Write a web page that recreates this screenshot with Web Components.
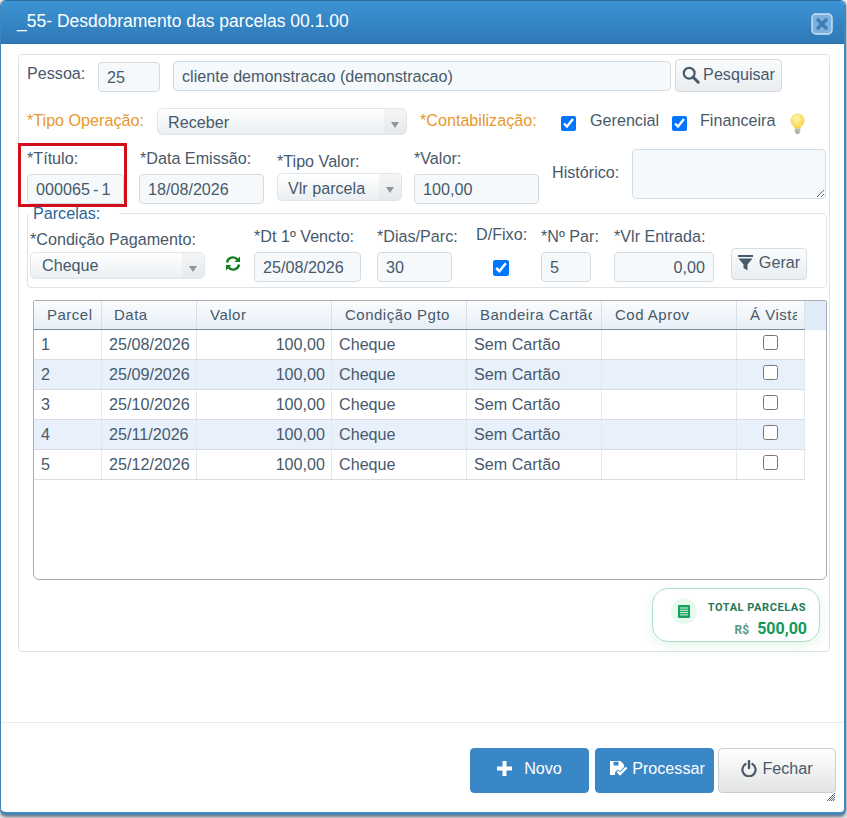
<!DOCTYPE html>
<html lang="pt-BR">
<head>
<meta charset="utf-8">
<title>Desdobramento das parcelas</title>
<style>
  html, body { margin: 0; height: 818px; overflow: hidden; }
  body {
    background: #e6e9ec;
    font: 16.15px "Liberation Sans", Arial, sans-serif;
    color: #47596b;
  }
</style>
</head>
<body>
<x-dialog>
  <span slot="title">_55- Desdobramento das parcelas 00.1.00</span>
  <x-parcel-form></x-parcel-form>
  <x-btn slot="footer" kind="primary" style="width:119px;height:45px;margin-right:2px" gap="12" lift="4"><x-ico slot="icon" name="plus"></x-ico>Novo</x-btn>
  <x-btn slot="footer" kind="primary" style="width:119px;height:45px" gap="4" lift="4" shift="6"><x-ico slot="icon" name="save"></x-ico>Processar</x-btn>
  <x-btn slot="footer" kind="close" style="width:118px;height:45px" gap="5" lift="4"><x-ico slot="icon" name="power"></x-ico>Fechar</x-btn>
</x-dialog>

<script>
(function () {
  const icons = {
    search: '<svg width="18" height="18" viewBox="0 0 18 18"><circle cx="7.2" cy="7.2" r="5.4" fill="none" stroke="#47596b" stroke-width="2.2"/><path d="M11 11l5.2 5.2" stroke="#47596b" stroke-width="3" stroke-linecap="round"/></svg>',
    filter: '<svg width="15" height="16" viewBox="0 0 15 16"><rect x="0" y="0" width="15" height="2" fill="#47596b"/><path d="M0.5 3.5h14l-5 6v6l-4-2.500v-3.500z" fill="#47596b"/></svg>',
    refresh: '<svg width="16" height="17" viewBox="0 0 16 17"><g fill="none" stroke="#12801f" stroke-width="2.400"><path d="M2 7.500a6 6 0 0 1 10.600-2.800"/><path d="M14 9.500a6 6 0 0 1-10.600 2.800"/></g><path d="M15 1.500v5.500h-5.500z" fill="#12801f"/><path d="M1 15.500v-5.500h5.500z" fill="#12801f"/></svg>',
    plus: '<svg width="15" height="15" viewBox="0 0 15 15"><path d="M5.500 0h4v5.500H15v4H9.500V15h-4V9.500H0v-4h5.500z" fill="#fff"/></svg>',
    save: '<svg width="18" height="15" viewBox="0 0 18 15"><path fill="#fff" fill-rule="evenodd" d="M0 0h10.500L14 3.500V6L9.800 10.200 8 8.500 5 11.500V14H0zM3.500 0.800v3.700h5V0.800z"/><path d="M7.500 10.500l2.500 2.500 6.500-6.500" fill="none" stroke="#fff" stroke-width="2.400"/></svg>',
    power: '<svg width="16" height="17" viewBox="0 0 16 17"><path d="M4.600 4a6.600 6.600 0 1 0 6.800 0" fill="none" stroke="#47596b" stroke-width="2.200" stroke-linecap="round"/><path d="M8 1v7" stroke="#47596b" stroke-width="2.400" stroke-linecap="round"/></svg>',
    bulb: '<svg width="15" height="21" viewBox="0 0 15 21"><defs><radialGradient id="b" cx=".45" cy=".35" r=".7"><stop offset="0" stop-color="#fff6b0"/><stop offset="1" stop-color="#f5cf3a"/></radialGradient></defs><path d="M7.500 0.500a7 7 0 0 0-4.300 12.500c.9.900 1.300 1.800 1.300 2.500h6c0-.7.400-1.600 1.300-2.500A7 7 0 0 0 7.500 .5z" fill="url(#b)"/><rect x="4.700" y="15.500" width="5.600" height="4" rx="1" fill="#b9b9ae"/><rect x="5.800" y="19.300" width="3.400" height="1.400" fill="#8f8f88"/></svg>',
    close: '<svg width="22" height="22" viewBox="0 0 22 22"><rect x="1" y="1" width="20" height="20" rx="4" fill="#7db2de" stroke="#cfe4f5" stroke-width="1.400"/><path d="M7 7l8 8M15 7l-8 8" stroke="#3f7fb6" stroke-width="3.600" stroke-linecap="round"/></svg>',
    list: '<svg width="12" height="13" viewBox="0 0 12 13"><rect width="12" height="13" rx="1" fill="#17a05e"/><path d="M2 3h8M2 5.300h8M2 7.600h8M2 9.900h8" stroke="#d9f7e6" stroke-width="1"/></svg>',
    grip: '<svg width="10" height="10" viewBox="0 0 10 10"><path d="M1 9l8-8M3 9l6-6M5 9l4-4M7 9l2-2" stroke="#5c6670" stroke-width="1"/></svg>'
  };

  class XIco extends HTMLElement {
    constructor() {
      super();
      this.attachShadow({mode: 'open'});
    }
    connectedCallback() {
      this.shadowRoot.innerHTML = `<style>:host{display:inline-flex;line-height:0}</style>${icons[this.getAttribute('name')] || ''}`;
    }
  }

  const dialogTpl = document.createElement('template');
  dialogTpl.innerHTML = `
    <style>
      :host { display: flex; flex-direction: column; box-sizing: border-box; width: 846px; height: 815px;
        background: #fff; border: 1px solid #3f87bd; border-width: 1px 2px 3px 1px; border-top-color: #2c6a9c;
        border-radius: 6px; box-shadow: 0 2px 3px rgba(60,70,85,.7); position: relative; overflow: hidden; }
      header { flex: none; height: 43px; display: flex; align-items: center; justify-content: space-between;
        padding: 0 11px 1px 16px; box-sizing: border-box; border-bottom: 1px solid #2e72aa;
        background: linear-gradient(#3c94d4, #2f78b6); color: #fff; font-size: 17.5px; }
      header x-ico { margin-top: 5px; }
      main { flex: none; height: 678px; box-sizing: border-box; padding: 10px 15px 0 17px; }
      footer { flex: 1; border-top: 1px solid #e8ecef; display: flex; justify-content: flex-end; align-items: flex-start;
        padding: 25px 8px 0 0; gap: 4px; }
      .grip { position: absolute; right: 8px; bottom: 10px; }
    </style>
    <header><slot name="title"></slot><x-ico name="close"></x-ico></header>
    <main><slot></slot></main>
    <footer><slot name="footer"></slot></footer>
    <x-ico class="grip" name="grip"></x-ico>`;

  class XDialog extends HTMLElement {
    constructor() {
      super();
      this.attachShadow({mode: 'open'});
      this.shadowRoot.appendChild(dialogTpl.content.cloneNode(true));
    }
  }

  const inputTpl = document.createElement('template');
  inputTpl.innerHTML = `
    <style>
      :host { display: block; box-sizing: border-box; height: 30px; padding: 0 8px; background: #f5f9fc;
        border: 1px solid #d4dce3; border-radius: 4px; line-height: 29px; white-space: nowrap; overflow: hidden; }
      :host([align=right]) { text-align: right; }
    </style><slot></slot>`;

  class XInput extends HTMLElement {
    constructor() {
      super();
      this.attachShadow({mode: 'open'});
      this.shadowRoot.appendChild(inputTpl.content.cloneNode(true));
    }
  }

  const selectTpl = document.createElement('template');
  selectTpl.innerHTML = `
    <style>
      :host { display: flex; align-items: center; justify-content: space-between; box-sizing: border-box; height: 27px;
        padding-left: var(--pad, 10px); background: linear-gradient(#fff, #ebeff2); border: 1px solid #e0e5ea; border-radius: 5px; }
      .lbl { padding-top: var(--pt, 0); }
      .arrow { width: 22px; height: 100%; display: flex; align-items: center; justify-content: center;
        padding-top: 6px; box-sizing: border-box; background: linear-gradient(#f4f5f6, #e6e9ec); border-radius: 0 5px 5px 0; }
      .arrow i { border: 4px solid transparent; border-top: 6px solid #8d979f; border-bottom: 0; }
    </style><span class="lbl"><slot></slot></span><span class="arrow"><i></i></span>`;

  class XSelect extends HTMLElement {
    constructor() {
      super();
      this.attachShadow({mode: 'open'});
      this.shadowRoot.appendChild(selectTpl.content.cloneNode(true));
    }
  }

  const btnTpl = document.createElement('template');
  btnTpl.innerHTML = `
    <style>
      :host { display: inline-flex; align-items: center; justify-content: center; box-sizing: border-box;
        border-radius: 4px; border: 1px solid #d6dce1; background: linear-gradient(#fbfcfd, #e9edf0); white-space: nowrap; }
      :host([kind=primary]) { background: #3a87c8; border-color: #3a87c8; color: #fff; }
      :host([kind=close]) { background: linear-gradient(#fff, #e2e3e4); border-color: #cbced1; }
      slot[name=icon] { display: inline-flex; }
    </style><slot name="icon"></slot><span class="t"><slot></slot></span>`;

  class XBtn extends HTMLElement {
    constructor() {
      super();
      this.attachShadow({mode: 'open'});
      this.shadowRoot.appendChild(btnTpl.content.cloneNode(true));
    }
    connectedCallback() {
      this.shadowRoot.querySelector('.t').style.marginLeft = (this.getAttribute('gap') || 4) + 'px';
      this.style.paddingBottom = (this.getAttribute('lift') || 0) + 'px';
      this.style.paddingLeft = (this.getAttribute('shift') || 0) + 'px';
    }
  }

  const fieldTpl = document.createElement('template');
  fieldTpl.innerHTML = `
    <style>
      :host { display: flex; flex-direction: column; flex: none; }
      label { height: 18px; line-height: 16px; white-space: nowrap; margin-bottom: var(--gap, 6px); padding-left: var(--lpad, 0); }
    </style><label></label><slot></slot>`;

  class XField extends HTMLElement {
    constructor() {
      super();
      this.attachShadow({mode: 'open'});
      this.shadowRoot.appendChild(fieldTpl.content.cloneNode(true));
    }
    connectedCallback() {
      this.shadowRoot.querySelector('label').textContent = this.getAttribute('label');
    }
  }

  const gridTpl = document.createElement('template');
  gridTpl.innerHTML = `
    <style>
      :host { display: block; box-sizing: border-box; border: 1px solid #a9adb1; border-radius: 2px 2px 6px 6px; overflow: hidden; --cols: 68px 95px 135px 135px 135px 135px 68px; }
      .head { display: flex; height: 29px; background: #dfebf7; }
      .row { display: grid; grid-template-columns: var(--cols); }
      .head .row { border-bottom: 1px solid #7e8b97; background: linear-gradient(#fafcfe, #e7eef6); height: 29px; box-sizing: border-box; }
      .head span { padding: 0 9px 0 13px; line-height: 27px; font-size: 15px; letter-spacing: .5px; border-right: 1px solid #d5e0ea; }
      .head span:nth-child(2) { padding-left: 12px; }
      .head span:last-child { padding-right: 7px; }
      .head span i { display: block; font-style: normal; overflow: hidden; white-space: nowrap; }
      .body { width: 771px; border-left: 1px solid #b3b6b9; margin-left: -1px; box-sizing: content-box; }
      .body .row { height: 30px; box-sizing: border-box; border-bottom: 1px solid #d9dde1; }
      .body .row:nth-child(even) { background: #e8f1fb; }
      .body span { padding: 0 7px; line-height: 29px; border-right: 1px solid #e2e9ef; white-space: nowrap; overflow: hidden; }
      .body span.num { text-align: right; padding-right: 6px; }
      .body span.chk { display: flex; justify-content: center; padding: 5px 0 0; box-sizing: border-box; }
      input { width: 15px; height: 15px; margin: 0; }
    </style>
    <div class="head"><div class="row"></div></div>
    <div class="body"></div>`;

  class XGrid extends HTMLElement {
    constructor() {
      super();
      this.attachShadow({mode: 'open'});
      this.shadowRoot.appendChild(gridTpl.content.cloneNode(true));
    }
    connectedCallback() {
      const cols = ['Parcel', 'Data', 'Valor', 'Condição Pgto', 'Bandeira Cartão', 'Cod Aprov', 'Á Vista'];
      const dates = ['25/08/2026', '25/09/2026', '25/10/2026', '25/11/2026', '25/12/2026'];
      this.shadowRoot.querySelector('.head .row').innerHTML = cols.map(c => `<span><i>${c}</i></span>`).join('');
      this.shadowRoot.querySelector('.body').innerHTML = dates.map((d, i) => `
        <div class="row">
          <span>${i + 1}</span><span>${d}</span><span class="num">100,00</span><span>Cheque</span>
          <span>Sem Cartão</span><span></span><span class="chk"><input type="checkbox"></span>
        </div>`).join('');
    }
  }

  const totalTpl = document.createElement('template');
  totalTpl.innerHTML = `
    <style>
      :host { display: flex; align-items: center; box-sizing: border-box; width: 168px; height: 54px; padding: 0 13px 0 18px;
        font-family: Roboto, "Liberation Sans", sans-serif; background: #fff; border: 1px solid #aee0c4; border-radius: 16px;
        box-shadow: 0 4px 12px rgba(40,180,110,.12); }
      .dot { width: 26px; height: 26px; border-radius: 50%; background: #e8faf0; display: flex; align-items: center; justify-content: center; margin-top: -8px; }
      .txt { flex: 1; text-align: right; padding-top: 11px; }
      .lbl { font-size: 11px; font-weight: 700; letter-spacing: .55px; color: #23795a; line-height: 13px; }
      .val { line-height: 20px; margin: 5px -1px 0 0; color: #10995a; font-size: 16px; font-weight: 700; }
      .val small { font-size: 12px; color: #5b9a82; margin-right: 8px; }
    </style>
    <span class="dot"><x-ico name="list"></x-ico></span>
    <div class="txt"><div class="lbl">TOTAL PARCELAS</div><div class="val"><small>R$</small>500,00</div></div>`;

  class XTotal extends HTMLElement {
    constructor() {
      super();
      this.attachShadow({mode: 'open'});
      this.shadowRoot.appendChild(totalTpl.content.cloneNode(true));
    }
  }

  const formTpl = document.createElement('template');
  formTpl.innerHTML = `
    <style>
      :host { display: flex; flex-direction: column; box-sizing: border-box; width: 812px; height: 598px; padding: 4px 2px 0 8px;
        border: 1px solid #dfe3e6; border-radius: 4px; position: relative; }
      .row { display: flex; align-items: flex-start; flex: none; }
      .lab { flex: none; height: 18px; line-height: 16px; white-space: nowrap; }
      .req { color: #e8982a; }
      input[type=checkbox] { flex: none; margin: 0; width: 15px; height: 15px; }
      textarea { box-sizing: border-box; display: block; width: 194px; height: 50px; margin: 0; background: #f5f9fc; border: 1px solid #d4dce3; border-radius: 4px; }
      .mark { position: absolute; left: -1px; top: 88px; width: 109px; height: 64px; box-sizing: border-box; border: 3px solid #d20f18; pointer-events: none; }
      fieldset { flex: none; box-sizing: border-box; width: 800px; height: 84px; margin: 0; padding: 0 0 0 2px; border: 1px solid #dfe3e6; border-radius: 4px; min-width: 0; }
      legend { padding: 0 19px 0 3px; margin-left: 0; height: 18px; line-height: 18px; color: #2a6599; }
      x-grid { flex: none; margin: 12px 0 0 6px; width: 794px; height: 280px; }
      x-total { align-self: flex-end; margin: 8px 7px 0 0; }
    </style>

    <div class="row" style="height:33px">
      <span class="lab" style="width:71px;margin-top:6px">Pessoa:</span>
      <x-input style="width:62px;margin-top:3px">25</x-input>
      <x-input style="width:498px;margin:2px 4px 0 13px">cliente demonstracao (demonstracao)</x-input>
      <x-btn style="width:107px;height:33px" gap="3" lift="2"><x-ico slot="icon" name="search"></x-ico>Pesquisar</x-btn>
    </div>

    <div class="row" style="height:27px;margin-top:16px">
      <span class="lab req" style="width:130px;margin-top:4px">*Tipo Operação:</span>
      <x-select style="width:250px;--pt:2px">Receber</x-select>
      <span class="lab req" style="width:141px;margin:4px 0 0 13px">*Contabilização:</span>
      <input type="checkbox" checked style="margin-top:8px">
      <span class="lab" style="width:82px;margin:4px 0 0 14px">Gerencial</span>
      <input type="checkbox" checked style="margin-top:8px">
      <span class="lab" style="width:90px;margin:4px 0 0 13px">Financeira</span>
      <x-ico name="bulb" style="margin-top:5px"></x-ico>
    </div>

    <div class="row" style="height:55px;margin-top:14px">
      <x-field label="*Título:" style="width:97px;margin-top:1px"><x-input style="word-spacing:-1.4px">000065 - 1</x-input></x-field>
      <x-field label="*Data Emissão:" style="width:125px;margin:1px 0 0 15px;--lpad:1px"><x-input>18/08/2026</x-input></x-field>
      <x-field label="*Tipo Valor:" style="width:125px;margin:4px 0 0 13px;--gap:2px"><x-select style="height:28px;--pt:2px">Vlr parcela</x-select></x-field>
      <x-field label="*Valor:" style="width:125px;margin:1px 0 0 12px"><x-input>100,00</x-input></x-field>
      <span class="lab" style="width:80px;margin:15px 0 0 13px">Histórico:</span>
      <textarea></textarea>
    </div>

    <fieldset>
      <legend>Parcelas:</legend>
      <div class="row">
        <x-field label="*Condição Pagamento:" style="width:175px;margin-top:9px;--gap:3px"><x-select style="--pad:11px">Cheque</x-select></x-field>
        <x-ico name="refresh" style="margin:33px 13px 0 20px"></x-ico>
        <x-field label="*Dt 1º Vencto:" style="width:107px;margin-top:6px"><x-input>25/08/2026</x-input></x-field>
        <x-field label="*Dias/Parc:" style="width:75px;margin:6px 0 0 16px"><x-input>30</x-input></x-field>
        <div style="width:65px;margin:4px 0 0 24px">
          <div class="lab">D/Fixo:</div>
          <input type="checkbox" checked style="width:16px;height:16px;margin:16px 0 0 17px">
        </div>
        <x-field label="*Nº Par:" style="width:50px;margin-top:6px"><x-input>5</x-input></x-field>
        <x-field label="*Vlr Entrada:" style="width:100px;margin:6px 0 0 23px"><x-input align="right">0,00</x-input></x-field>
        <x-btn style="width:76px;height:32px;margin:26px 0 0 17px" gap="6" lift="3"><x-ico slot="icon" name="filter"></x-ico>Gerar</x-btn>
      </div>
    </fieldset>

    <x-grid></x-grid>
    <x-total></x-total>
    <div class="mark"></div>`;

  class XParcelForm extends HTMLElement {
    constructor() {
      super();
      this.attachShadow({mode: 'open'});
      this.shadowRoot.appendChild(formTpl.content.cloneNode(true));
    }
  }

  customElements.define('x-ico', XIco);
  customElements.define('x-dialog', XDialog);
  customElements.define('x-input', XInput);
  customElements.define('x-select', XSelect);
  customElements.define('x-btn', XBtn);
  customElements.define('x-field', XField);
  customElements.define('x-grid', XGrid);
  customElements.define('x-total', XTotal);
  customElements.define('x-parcel-form', XParcelForm);
})();
</script>
</body>
</html>
